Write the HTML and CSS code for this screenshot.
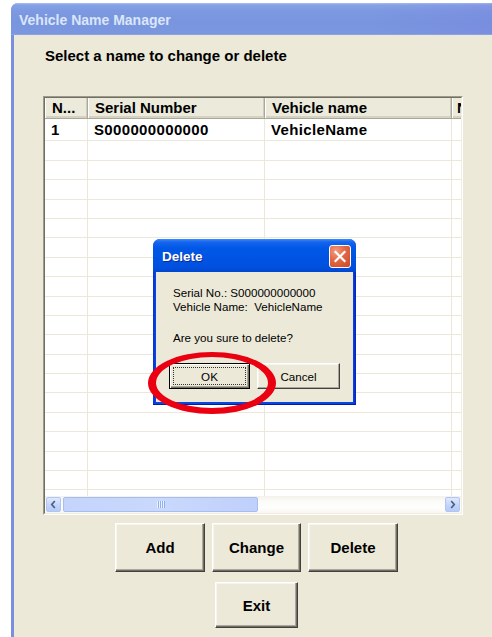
FILE: index.html
```html
<!DOCTYPE html>
<html lang="en">
<head>
<meta charset="utf-8">
<title>Vehicle Name Manager</title>
<link rel="stylesheet" href="styles.css">
</head>
<body>
<div class="window">
  <div class="titlebar"><span class="title">Vehicle Name Manager</span></div>
  <div class="client">
    <p class="prompt">Select a name to change or delete</p>

    <div class="listview">
      <div class="lv-inner">
        <div class="lv-view">
          <div class="lv-head">
            <div class="lv-th c1">N...</div>
            <div class="lv-th c2">Serial Number</div>
            <div class="lv-th c3">Vehicle name</div>
            <div class="lv-th c4">N</div>
          </div>
          <div class="lv-body">
            <div class="lv-row first"><div class="lv-td c1">1</div><div class="lv-td c2">S000000000000</div><div class="lv-td c3">VehicleName</div><div class="lv-td c4"></div></div>
            <div class="lv-row"><div class="lv-td c1"></div><div class="lv-td c2"></div><div class="lv-td c3"></div><div class="lv-td c4"></div></div>
            <div class="lv-row"><div class="lv-td c1"></div><div class="lv-td c2"></div><div class="lv-td c3"></div><div class="lv-td c4"></div></div>
            <div class="lv-row"><div class="lv-td c1"></div><div class="lv-td c2"></div><div class="lv-td c3"></div><div class="lv-td c4"></div></div>
            <div class="lv-row"><div class="lv-td c1"></div><div class="lv-td c2"></div><div class="lv-td c3"></div><div class="lv-td c4"></div></div>
            <div class="lv-row"><div class="lv-td c1"></div><div class="lv-td c2"></div><div class="lv-td c3"></div><div class="lv-td c4"></div></div>
            <div class="lv-row"><div class="lv-td c1"></div><div class="lv-td c2"></div><div class="lv-td c3"></div><div class="lv-td c4"></div></div>
            <div class="lv-row"><div class="lv-td c1"></div><div class="lv-td c2"></div><div class="lv-td c3"></div><div class="lv-td c4"></div></div>
            <div class="lv-row"><div class="lv-td c1"></div><div class="lv-td c2"></div><div class="lv-td c3"></div><div class="lv-td c4"></div></div>
            <div class="lv-row"><div class="lv-td c1"></div><div class="lv-td c2"></div><div class="lv-td c3"></div><div class="lv-td c4"></div></div>
            <div class="lv-row"><div class="lv-td c1"></div><div class="lv-td c2"></div><div class="lv-td c3"></div><div class="lv-td c4"></div></div>
            <div class="lv-row"><div class="lv-td c1"></div><div class="lv-td c2"></div><div class="lv-td c3"></div><div class="lv-td c4"></div></div>
            <div class="lv-row"><div class="lv-td c1"></div><div class="lv-td c2"></div><div class="lv-td c3"></div><div class="lv-td c4"></div></div>
            <div class="lv-row"><div class="lv-td c1"></div><div class="lv-td c2"></div><div class="lv-td c3"></div><div class="lv-td c4"></div></div>
            <div class="lv-row"><div class="lv-td c1"></div><div class="lv-td c2"></div><div class="lv-td c3"></div><div class="lv-td c4"></div></div>
            <div class="lv-row"><div class="lv-td c1"></div><div class="lv-td c2"></div><div class="lv-td c3"></div><div class="lv-td c4"></div></div>
            <div class="lv-row"><div class="lv-td c1"></div><div class="lv-td c2"></div><div class="lv-td c3"></div><div class="lv-td c4"></div></div>
            <div class="lv-row"><div class="lv-td c1"></div><div class="lv-td c2"></div><div class="lv-td c3"></div><div class="lv-td c4"></div></div>
            <div class="lv-row"><div class="lv-td c1"></div><div class="lv-td c2"></div><div class="lv-td c3"></div><div class="lv-td c4"></div></div>
            <div class="lv-row"><div class="lv-td c1"></div><div class="lv-td c2"></div><div class="lv-td c3"></div><div class="lv-td c4"></div></div>
          </div>
        </div>

        <div class="hscroll">
          <div class="sb-btn">
            <svg width="15" height="15" viewBox="0 0 15 15"><path d="M9 3.5 L5.5 7.5 L9 11.5" fill="none" stroke="#4d6185" stroke-width="2"/></svg>
          </div>
          <div class="sb-thumb"><span class="grip"></span></div>
          <div class="sb-track"></div>
          <div class="sb-btn">
            <svg width="15" height="15" viewBox="0 0 15 15"><path d="M6 3.5 L9.5 7.5 L6 11.5" fill="none" stroke="#4d6185" stroke-width="2"/></svg>
          </div>
        </div>
      </div>
    </div>

    <div class="actions">
      <div class="btn-row">
        <button class="btn">Add</button>
        <button class="btn w89">Change</button>
        <button class="btn">Delete</button>
      </div>
      <div class="btn-row">
        <button class="btn exit">Exit</button>
      </div>
    </div>
  </div>

  <div class="dialog">
    <div class="dlg-title">
      <span>Delete</span>
      <span class="dlg-close">
        <svg width="20" height="21" viewBox="0 0 20 21"><path d="M5.5 6 L14.5 15 M14.5 6 L5.5 15" stroke="#fff" stroke-width="2.2" stroke-linecap="square"/></svg>
      </span>
    </div>
    <div class="dlg-body">
      <div class="dlg-text">
        <div>Serial No.: S000000000000</div>
        <div>Vehicle Name:&nbsp; VehicleName</div>
        <div class="question">Are you sure to delete?</div>
      </div>
      <div class="dlg-buttons">
        <button class="dbtn default"><span class="focus">OK</span></button>
        <button class="dbtn">Cancel</button>
      </div>
    </div>
  </div>

  <div class="ring"></div>
</div>
</body>
</html>
```

FILE: styles.css
```css
* {
  box-sizing: border-box;
}

html,
body {
  margin: 0;
}

body {
  width: 492px;
  height: 637px;
  overflow: hidden;
  background: #ffffff;
  font-family: "Liberation Sans", Arial, sans-serif;
}

/* main window frame */
.window {
  position: relative;
  margin: 3px 0 0 11px;
  width: 520px;
  height: 634px;
  background: #7b8fe0;
  border-radius: 7px 0 0 0;
  display: flex;
  flex-direction: column;
}

.titlebar {
  height: 32px;
  padding: 2px 0 0 8px;
  border-radius: 7px 0 0 0;
  background:
    linear-gradient(90deg, rgba(0, 0, 0, 0) 70%, rgba(120, 110, 220, 0.25) 100%),
    linear-gradient(#a9c0f0 0, #86a2e6 2px, #7c99e1 8px, #7895df 60%, #7b97df 100%);
  display: flex;
  align-items: center;
  border-bottom: 1px solid #8aa2e4;
}

.title {
  color: #dbe6f8;
  font-weight: bold;
  font-size: 14px;
}

.client {
  flex: 1;
  margin-left: 3px;
  background: #ece9d8;
  padding: 12px 0 0 29px;
}

.prompt {
  margin: 0 0 31px 2px;
  font-size: 15px;
  font-weight: bold;
  line-height: 18px;
  color: #000;
}

/* list view */
.listview {
  width: 420px;
  height: 419px;
  border: 1px solid;
  border-color: #9d9a8a #ffffff #ffffff #9d9a8a;
}

.lv-inner {
  height: 100%;
  border: 1px solid;
  border-color: #716f64 #f1efe2 #f1efe2 #716f64;
  background: #ffffff;
  display: flex;
  flex-direction: column;
  overflow: hidden;
}

.lv-view {
  height: 398px;
  overflow: hidden;
}

.lv-head {
  display: flex;
  height: 21px;
  width: 430px;
  background: #ebeadb;
  border-bottom: 1px solid #aca899;
  box-shadow: inset 0 -2px #d6d2c2;
}

.lv-th {
  font-size: 15px;
  font-weight: bold;
  line-height: 20px;
  padding-left: 7px;
  white-space: nowrap;
  overflow: hidden;
  border-right: 1px solid #aca899;
  box-shadow: inset -1px 0 #d0ccbc, inset 1px 0 #ffffff;
}

.c1 { width: 43px; flex: none; }
.c2 { width: 177px; flex: none; }
.c3 { width: 187px; flex: none; }
.c4 { width: 23px; flex: none; }

.lv-th.c4 {
  padding-left: 5px;
}

.lv-body {
  width: 430px;
}

.lv-row {
  display: flex;
  height: 19.4px;
  border-bottom: 1px solid #ebe8da;
}

.lv-row.first {
  height: 22.4px;
}

.lv-td {
  font-size: 15px;
  font-weight: bold;
  line-height: 21px;
  padding-left: 6px;
  white-space: nowrap;
  letter-spacing: 0.35px;
  border-right: 1px solid #ebe8da;
}

/* horizontal scroll bar */
.hscroll {
  height: 17px;
  display: flex;
  align-items: stretch;
  background: linear-gradient(#f3f1ea 0, #fbfbf8 30%, #fefefe 70%, #f7f6f1 100%);
}

.sb-btn {
  width: 17px;
  flex: none;
  padding: 1px;
  display: flex;
}

.sb-btn svg {
  display: block;
  border: 1px solid #b1c5f3;
  border-radius: 2px;
  background: linear-gradient(#dfe8fd, #c1d3fb 60%, #b6cbf9);
}

.sb-thumb {
  width: 195px;
  flex: none;
  margin: 1px 0 1px 1px;
  border: 1px solid #a6bdf2;
  border-radius: 2px;
  background: linear-gradient(90deg, #c4d4fb, #c9d8fc 50%, #bfd0fb);
  display: flex;
  align-items: center;
  justify-content: center;
}

.grip {
  width: 8px;
  height: 7px;
  background: repeating-linear-gradient(90deg, #eef3fe 0 1px, #8caef3 1px 2px);
}

.sb-track {
  flex: 1;
}

/* command buttons */
.actions {
  width: 420px;
  margin-top: 8px;
  padding-left: 7px;
  display: flex;
  flex-direction: column;
  align-items: center;
  gap: 10px;
}

.btn-row {
  display: flex;
  gap: 7px;
}

.btn {
  width: 90px;
  height: 49px;
  padding: 0;
  font-family: "Liberation Sans", Arial, sans-serif;
  font-size: 15px;
  font-weight: bold;
  color: #000;
  background: #ece9d8;
  border: 1px solid;
  border-color: #ffffff #404040 #404040 #ffffff;
  box-shadow: inset -1px -1px #716f64, inset -2px -2px #aca899, inset 1px 1px #f6f5ee;
}

.btn.w89 {
  width: 89px;
}

.btn.exit {
  width: 83px;
  height: 46px;
}

/* confirmation dialog */
.dialog {
  position: absolute;
  left: 142px;
  top: 236px;
  width: 203px;
  height: 166px;
  padding: 0 3px 3px;
  border-radius: 7px 7px 0 0;
  background: linear-gradient(90deg, #0831d9 0, #0a47e0 3px, #0a47e0 calc(100% - 3px), #0022c0 100%);
  box-shadow: inset 0 -1px #001ea0;
  display: flex;
  flex-direction: column;
}

.dlg-title {
  position: relative;
  height: 33px;
  margin: 0 -3px;
  padding: 1px 0 0 9px;
  border-radius: 7px 7px 0 0;
  background: linear-gradient(#3e8cf8 0, #1665ee 3px, #0058e6 9px, #0055e4 50%, #0050de 85%, #0047d0 100%);
  display: flex;
  align-items: center;
  color: #ffffff;
  font-size: 13.5px;
  font-weight: bold;
  text-shadow: 1px 1px #0a2c9c;
}

.dlg-close {
  position: absolute;
  right: 5px;
  top: 6px;
  width: 22px;
  height: 23px;
  border: 1px solid #ffffff;
  border-radius: 3px;
  background: radial-gradient(circle at 30% 25%, #f19c80 0, #e46b48 40%, #cc4623 100%);
  display: flex;
  align-items: center;
  justify-content: center;
}

.dlg-body {
  flex: 1;
  background: #ece9d8;
  padding: 14px 0 0 13px;
}

.dlg-text {
  margin-left: 4px;
  font-size: 11.6px;
  line-height: 14px;
  color: #000;
}

.question {
  margin-top: 17px;
}

.dlg-buttons {
  margin-top: 18px;
  display: flex;
  gap: 7px;
}

.dbtn {
  width: 83px;
  height: 26px;
  padding: 0;
  font-family: "Liberation Sans", Arial, sans-serif;
  font-size: 11.6px;
  color: #000;
  background: #ece9d8;
  border: 1px solid;
  border-color: #ffffff #404040 #404040 #ffffff;
  box-shadow: inset -1px -1px #aca899, inset 1px 1px #f6f5ee;
}

.dbtn.default {
  width: 81px;
  border: 1px solid #000;
  padding: 1px;
  box-shadow: inset 1px 1px #ffffff, inset -1px -1px #716f64, inset -2px -2px #aca899;
  display: flex;
}

.focus {
  flex: 1;
  margin: 2px;
  border: 1px dotted #333;
  display: flex;
  align-items: center;
  justify-content: center;
}

/* red marker around the OK button */
.ring {
  position: absolute;
  left: 137px;
  top: 349px;
  width: 128px;
  height: 62px;
  border-style: solid;
  border-color: #ea0011;
  border-width: 5px 8px 6px 8px;
  border-radius: 50%;
}
```
